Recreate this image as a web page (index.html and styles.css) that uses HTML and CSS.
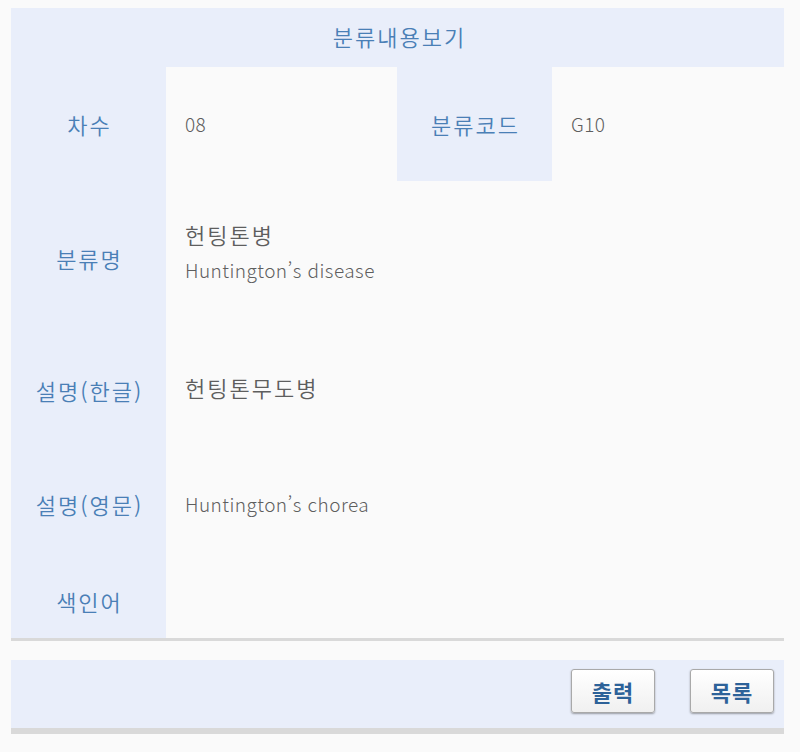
FILE: index.html
```html
<!DOCTYPE html>
<html lang="ko">
<head>
  <meta charset="UTF-8" />
  <meta name="viewport" content="width=device-width, initial-scale=1.0"/>
  <title>분류내용보기</title>
  <link rel="stylesheet" href="styles.css">
</head>
<body>
  <div class="view-wrap">
    <div class="view-title">분류내용보기</div>
    <div class="view-table">
      <div class="th row-1">차수</div>
      <div class="td row-1">08</div>
      <div class="th row-1">분류코드</div>
      <div class="td row-1">G10</div>

      <div class="th row-2">분류명</div>
      <div class="td wide row-2">
        <div class="name-ko">헌팅톤병</div>
        <div class="name-en">Huntington’s disease</div>
      </div>

      <div class="th row-3">설명(한글)</div>
      <div class="td wide row-3">헌팅톤무도병</div>

      <div class="th row-4">설명(영문)</div>
      <div class="td wide row-4">Huntington’s chorea</div>

      <div class="th row-5">색인어</div>
      <div class="td wide row-5"></div>
    </div>

    <div class="btn-bar">
      <button class="btn">출력</button>
      <button class="btn">목록</button>
    </div>
  </div>
</body>
</html>
```

FILE: styles.css
```css
:root {
  --page: #fafafa;
  --band: #e9eefa;
  --label: #4a7fb6;
  --text: #5e5e5e;
  --line: #d9d9d9;
}
* { box-sizing: border-box; }
body {
  margin: 0;
  background: var(--page);
  font-family: "Noto Sans CJK KR", "Noto Sans", sans-serif;
}
.view-wrap {
  width: 773px;
  margin: 8px 0 0 11px;
}
.view-title {
  height: 59px;
  background: var(--band);
  color: var(--label);
  font-size: 22px;
  letter-spacing: 2px;
  font-weight: 350;
  display: flex;
  align-items: center;
  justify-content: center;
  padding: 0 0 4px 4px;
}
.view-table {
  display: grid;
  grid-template-columns: 155px 231px 155px 1fr;
  grid-template-rows: 114px 154px 110px 118px 75px;
  border-bottom: 3px solid var(--line);
}
.th {
  background: var(--band);
  color: var(--label);
  font-size: 22px;
  letter-spacing: 2px;
  font-weight: 350;
  display: flex;
  align-items: center;
  justify-content: center;
  padding-left: 2px;
}
.td {
  background: var(--page);
  color: var(--text);
  font-size: 19px;
  font-weight: 300;
  letter-spacing: 0.45px;
  padding-left: 19px;
  display: flex;
  flex-direction: column;
  justify-content: center;
}
.td.wide {
  grid-column: 2 / 5;
}
.row-1.td { padding-bottom: 2px; }
.row-2.td { justify-content: flex-start; padding-top: 37px; }
.name-ko {
  font-size: 22px;
  font-weight: 350;
  letter-spacing: 2px;
  margin-bottom: 6px;
}
.row-3.td {
  font-size: 22px;
  font-weight: 350;
  letter-spacing: 2px;
  padding-bottom: 6px;
}
.row-4.td { padding-bottom: 1px; }
.btn-bar {
  margin-top: 19px;
  height: 74px;
  background: var(--band);
  border-bottom: 6px solid var(--line);
  display: flex;
  justify-content: flex-end;
  align-items: center;
  gap: 35px;
  padding: 0 10px 7px 0;
}
.btn {
  width: 84px;
  height: 44px;
  border: 1px solid #a9a9a9;
  border-radius: 3px;
  background: linear-gradient(#ffffff, #f0f0f0);
  box-shadow: 0 1px 2px rgba(0, 0, 0, 0.35);
  color: #2d6299;
  font-family: "Noto Sans CJK KR", sans-serif;
  font-size: 22px;
  font-weight: bold;
  letter-spacing: 1px;
  cursor: pointer;
}
```
